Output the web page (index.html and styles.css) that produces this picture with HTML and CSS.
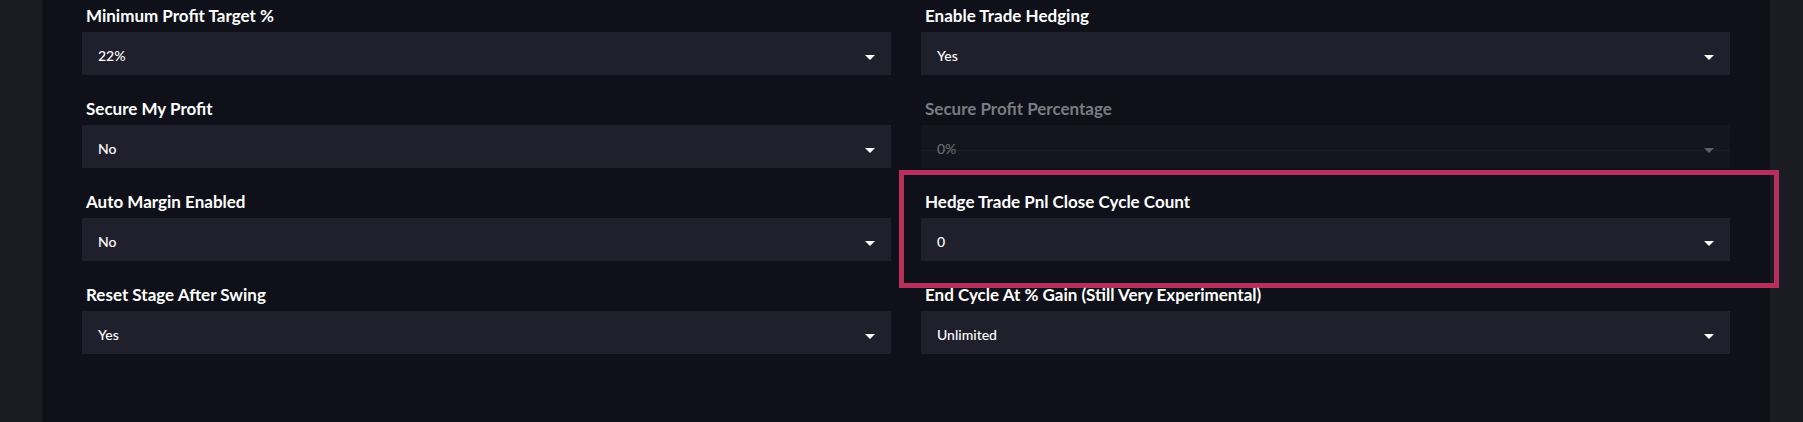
FILE: index.html
```html
<!DOCTYPE html>
<html lang="en">
<head>
<meta charset="utf-8">
<title>Settings</title>
<link rel="stylesheet" href="styles.css">
</head>
<body>
<main class="panel">
  <div class="grid">
    <div class="field">
      <div class="label">Minimum Profit Target %</div>
      <div class="select"><span class="value">22%</span><span class="arrow"></span></div>
    </div>
    <div class="field">
      <div class="label">Enable Trade Hedging</div>
      <div class="select"><span class="value">Yes</span><span class="arrow"></span></div>
    </div>
    <div class="field">
      <div class="label">Secure My Profit</div>
      <div class="select"><span class="value">No</span><span class="arrow"></span></div>
    </div>
    <div class="field disabled">
      <div class="label">Secure Profit Percentage</div>
      <div class="select"><span class="dots"></span><span class="value">0%</span><span class="arrow"></span></div>
    </div>
    <div class="field">
      <div class="label">Auto Margin Enabled</div>
      <div class="select"><span class="value">No</span><span class="arrow"></span></div>
    </div>
    <div class="field highlighted">
      <div class="label">Hedge Trade Pnl Close Cycle Count</div>
      <div class="select"><span class="value">0</span><span class="arrow"></span></div>
      <div class="highlight-box"></div>
    </div>
    <div class="field">
      <div class="label">Reset Stage After Swing</div>
      <div class="select"><span class="value">Yes</span><span class="arrow"></span></div>
    </div>
    <div class="field">
      <div class="label">End Cycle At % Gain (Still Very Experimental)</div>
      <div class="select"><span class="value">Unlimited</span><span class="arrow"></span></div>
    </div>
  </div>
</main>
</body>
</html>
```

FILE: styles.css
```css
html, body {
  margin: 0;
  padding: 0;
  height: 100%;
}
body {
  background: #1a1b23;
  font-family: "Lato", "Liberation Sans", sans-serif;
  color: #ffffff;
  overflow: hidden;
}
.panel {
  margin: 0 33px 0 42px;
  height: 422px;
  background: #0f1019;
  padding: 4px 40px 0 40px;
  box-sizing: border-box;
}
.grid {
  display: grid;
  grid-template-columns: 1fr 1fr;
  column-gap: 30px;
  row-gap: 22px;
}
.field {
  position: relative;
}
.label {
  font-size: 17px;
  font-weight: 700;
  line-height: 24px;
  height: 24px;
  margin-bottom: 4px;
  padding-left: 4px;
  white-space: nowrap;
}
.select {
  position: relative;
  height: 43px;
  box-sizing: border-box;
  padding: 4px 16px 0 16px;
  line-height: 39px;
  background: #1f202c;
  display: flex;
  align-items: flex-start;
  justify-content: space-between;
}
.value {
  position: relative;
  font-size: 14px;
  font-weight: 500;
}
.arrow {
  position: relative;
  width: 0;
  height: 0;
  border-left: 5px solid transparent;
  border-right: 5px solid transparent;
  border-top: 5px solid #ffffff;
  margin-top: 19px;
}
.disabled .label {
  color: #7b7c83;
}
.disabled .select {
  background: #14151e;
}
.disabled .value {
  color: #6c6d74;
}
.disabled .arrow {
  border-top-color: #5f6067;
}
.dots {
  position: absolute;
  left: 0;
  right: 0;
  top: 25px;
  border-bottom: 1px dotted #23242e;
}
.highlight-box {
  position: absolute;
  left: -22px;
  right: -49px;
  top: -20px;
  bottom: -27px;
  border: 5px solid #b92f5c;
  pointer-events: none;
}
```
